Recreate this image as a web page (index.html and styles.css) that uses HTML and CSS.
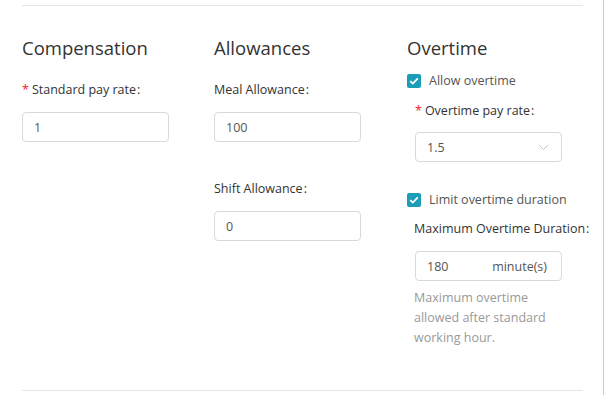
FILE: index.html
```html
<!DOCTYPE html>
<html lang="en">
<head>
    <meta charset="UTF-8">
    <meta name="viewport" content="width=device-width, initial-scale=1.0">
    <title>Pay settings</title>
    <link rel="stylesheet" href="styles.css">
</head>
<body>
    <div class="pagina">
        <div class="secao">
            <!-- Compensation -->
            <div class="coluna">
                <h2>Compensation</h2>
                <label class="rotulo obrigatorio">Standard pay rate<span class="dois-pontos">:</span></label>
                <input class="campo" type="text" value="1">
            </div>

            <!-- Allowances -->
            <div class="coluna">
                <h2>Allowances</h2>
                <label class="rotulo">Meal Allowance<span class="dois-pontos">:</span></label>
                <input class="campo" type="text" value="100">
                <label class="rotulo rotulo-segundo">Shift Allowance<span class="dois-pontos">:</span></label>
                <input class="campo" type="text" value="0">
            </div>

            <!-- Overtime -->
            <div class="coluna">
                <h2>Overtime</h2>
                <label class="marcar">
                    <span class="caixa">
                        <svg width="10" height="8" viewBox="0 0 10 8"><path d="M1.2 4.1 L3.8 6.6 L8.8 1.4" fill="none" stroke="#fff" stroke-width="1.8"/></svg>
                    </span>
                    Allow overtime
                </label>
                <div class="recuo">
                    <label class="rotulo obrigatorio rotulo-hora">Overtime pay rate<span class="dois-pontos">:</span></label>
                    <div class="campo selecao">
                        <span>1.5</span>
                        <svg width="11" height="7" viewBox="0 0 11 7"><path d="M0.8 0.8 L5.5 5.6 L10.2 0.8" fill="none" stroke="#c4c4c4" stroke-width="1"/></svg>
                    </div>
                </div>
                <label class="marcar marcar-segundo">
                    <span class="caixa">
                        <svg width="10" height="8" viewBox="0 0 10 8"><path d="M1.2 4.1 L3.8 6.6 L8.8 1.4" fill="none" stroke="#fff" stroke-width="1.8"/></svg>
                    </span>
                    Limit overtime duration
                </label>
                <div class="recuo">
                    <label class="rotulo rotulo-maximo">Maximum Overtime Duration<span class="dois-pontos">:</span></label>
                    <div class="campo unidade">
                        <span>180</span>
                        <span class="sufixo">minute(s)</span>
                    </div>
                    <p class="ajuda">Maximum overtime allowed after standard working hour.</p>
                </div>
            </div>
        </div>
    </div>
</body>
</html>
```

FILE: styles.css
```css
body {
    margin: 0;
    background-color: #fff;
    font-family: "Open Sans", "Noto Sans", sans-serif;
    color: #333;
}

.pagina {
    width: 604px;
    height: 395px;
    padding-top: 5px;
    box-sizing: border-box;
    border-right: 1px solid #c8c8c8;
}

.secao {
    display: grid;
    grid-template-columns: 192px 193px 176px;
    margin: 0 20px 0 22px;
    padding: 30px 0 0;
    box-sizing: border-box;
    border-top: 1px solid #e6e6e6;
    border-bottom: 1px solid #e6e6e6;
    height: 386px;
}

.coluna {
    display: flex;
    flex-direction: column;
    align-items: flex-start;
}

h2 {
    margin: 0;
    font-size: 18.5px;
    font-weight: normal;
    line-height: 24px;
    color: #333;
}

.rotulo {
    display: block;
    margin-top: 20px;
    font-size: 12.5px;
    line-height: 20px;
    color: #333;
}

.obrigatorio::before {
    content: "*";
    color: #f5222d;
    margin-right: 3px;
}

.dois-pontos {
    margin-left: 1px;
}

.rotulo-segundo {
    margin-top: 37px;
}

.campo {
    width: 147px;
    height: 30px;
    margin-top: 12px;
    padding: 0 11px;
    box-sizing: border-box;
    border: 1px solid #d9d9d9;
    border-radius: 4px;
    font-family: inherit;
    font-size: 12.5px;
    color: #555;
    background-color: #fff;
}

.marcar {
    display: flex;
    align-items: center;
    gap: 8px;
    margin-top: 11px;
    font-size: 12.5px;
    line-height: 20px;
    color: #555;
}

.marcar-segundo {
    margin-top: 28px;
}

.caixa {
    display: flex;
    align-items: center;
    justify-content: center;
    width: 14px;
    height: 14px;
    border-radius: 2px;
    background-color: #1c9db7;
}

.recuo {
    padding-left: 8px;
}

.rotulo-hora {
    margin-top: 10px;
}

.rotulo-maximo {
    margin-top: 9px;
    margin-left: -1px;
    white-space: nowrap;
}

.selecao,
.unidade {
    display: flex;
    align-items: center;
    justify-content: space-between;
}

.selecao {
    margin-top: 11px;
    padding-right: 12px;
}

.unidade {
    padding-right: 14px;
}

.sufixo {
    color: #555;
}

.ajuda {
    width: 150px;
    margin: 7px 0 0 -1px;
    font-size: 12.5px;
    line-height: 20px;
    color: #999;
}
```
